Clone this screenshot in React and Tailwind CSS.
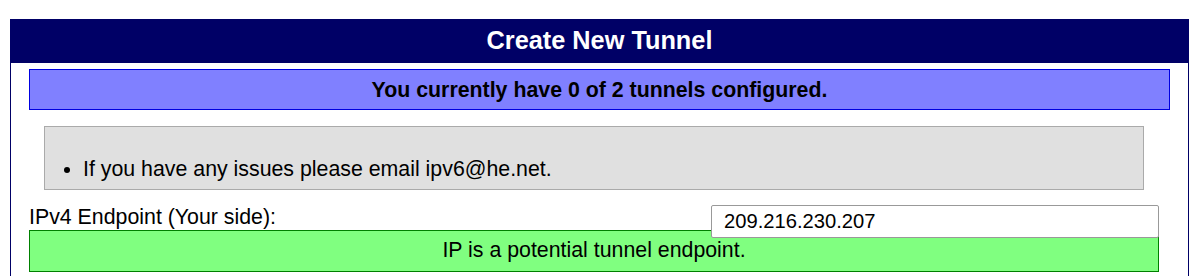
// App.jsx — "Create New Tunnel" panel
export default function App() {
  return (
    <div className="bg-white min-h-[276px] pt-[19px] font-['Liberation_Sans',Arial,sans-serif] text-black">
      <div className="ml-[10px] w-[1179px] border border-[#000066] border-b-0">
        {/* Header */}
        <div className="h-[44px] -mt-px -mx-px bg-[#000066] flex items-center justify-center">
          <h2 className="text-[25.3px] font-bold text-white leading-none">Create New Tunnel</h2>
        </div>

        <div className="px-[18px] pb-[6px]">
          {/* Tunnel count */}
          <div className="mt-[6px] h-[41px] pt-[3px] border border-[#0000e0] bg-[#8080ff] flex items-center justify-center">
            <span className="text-[21.33px] font-bold">You currently have 0 of 2 tunnels configured.</span>
          </div>

          {/* Notes */}
          <div className="mt-[16px] ml-[15px] w-[1100px] h-[64px] border border-[#aaaaaa] bg-[#e0e0e0]">
            <ul className="list-disc pl-[38px] pt-[30px] text-[21.33px] leading-[24px]">
              <li>If you have any issues please email ipv6@he.net.</li>
            </ul>
          </div>

          {/* Endpoint row */}
          <div className="mt-[13px] flex items-start">
            <label className="flex-1 mt-[2px] text-[21.33px] leading-[24px]">IPv4 Endpoint (Your side):</label>
            <input
              readOnly
              value="209.216.230.207"
              className="relative z-10 mt-[2px] mr-[11px] w-[448px] h-[33px] px-[12px] bg-white border border-[#999999] rounded-[2px] text-[20.2px] outline-none font-['Liberation_Sans',Arial,sans-serif]"
            />
          </div>
          <div className="-mt-[8px] mr-[11px] h-[42px] border border-[#008000] bg-[#80ff80] flex items-center justify-center">
            <span className="text-[21.33px]">IP is a potential tunnel endpoint.</span>
          </div>
        </div>
      </div>
    </div>
  );
}
